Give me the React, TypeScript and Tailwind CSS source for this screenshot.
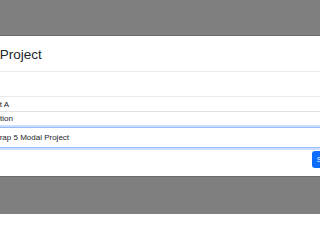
import React from 'react';

/**
 * Bootstrap-style modal over a grey backdrop (cropped view)
 */
const rows = ['Project A', 'Description'];

export default function App() {
  return (
    <div
      className="h-[214px] w-full overflow-hidden bg-[#7f7f7f] pt-[35px]"
      style={{ fontFamily: '"Liberation Sans", Arial, sans-serif' }}
    >
      <div className="ml-[-40px] w-[420px] border-y border-[#6c6c6c] bg-white">
        {/* header */}
        <div className="flex h-[36px] items-center border-b border-[#e9ecef] pl-[9px] pt-[2px]">
          <h5 className="text-[13.5px] leading-none text-[#212529]">New Project</h5>
        </div>

        {/* body */}
        <div className="pt-[24px] text-[8px] text-[#212529]">
          <div className="h-[15px] border-t border-[#ebebeb] pl-[17px] leading-[15px]">{rows[0]}</div>
          <div className="h-[15px] border-t border-[#e2e2e2] pl-[13px] leading-[14px]">{rows[1]}</div>
          <div className="mt-px h-[21px] border border-[#94bcfb] pl-[16px] leading-[19px] shadow-[0_0_0_2px_#cddffd]">
            Bootstrap 5 Modal Project
          </div>
        </div>

        {/* footer */}
        <div className="flex justify-end pt-[3px] pb-[8px] pr-[40px]">
          <button className="h-[17px] rounded-[3px] bg-[#0d6efd] px-[5px] text-[8px] text-white">Save</button>
        </div>
      </div>
    </div>
  );
}
